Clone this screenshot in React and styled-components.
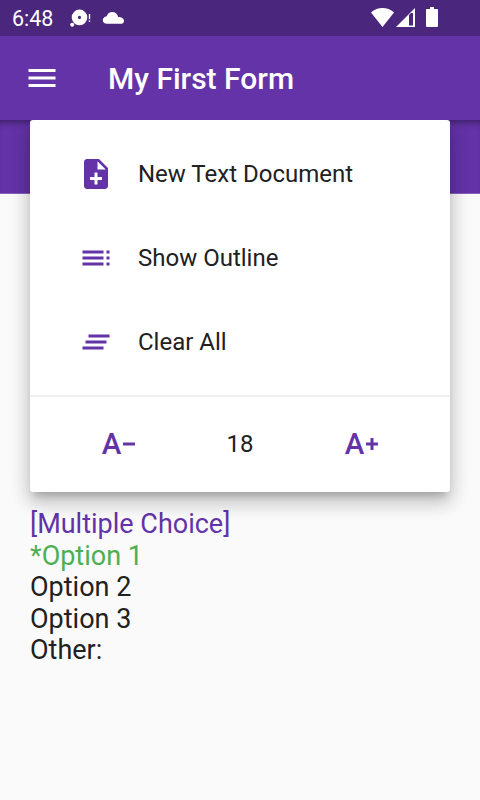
import React from "react";
import styled, { createGlobalStyle } from "styled-components";
import { MdMenu, MdNoteAdd, MdToc, MdClearAll } from "react-icons/md";

const GlobalStyle = createGlobalStyle`
  body {
    margin: 0;
    font-family: Roboto, "Liberation Sans", sans-serif;
  }
`;

const Screen = styled.div`
  position: relative;
  display: flex;
  flex-direction: column;
  height: 800px;
  width: 480px;
  overflow: hidden;
  background: #fafafa;
`;

const StatusBar = styled.div`
  display: flex;
  align-items: center;
  justify-content: space-between;
  height: 36px;
  flex: none;
  padding: 0 42px 0 12px;
  box-sizing: border-box;
  background: #4a277c;
  color: white;
`;

const StatusGroup = styled.div`
  display: flex;
  align-items: center;
`;

const Clock = styled.div`
  width: 58px;
  font-size: 21.5px;
  line-height: 36px;
  padding-top: 2px;
`;

const AppBar = styled.header`
  display: flex;
  align-items: center;
  gap: 48px;
  height: 84px;
  flex: none;
  padding: 0 24px;
  box-sizing: border-box;
  background: #6333a7;
  color: white;
  z-index: 3;
`;

const Title = styled.h1`
  font-size: 30px;
  font-weight: 500;
  line-height: 36px;
  margin: 2px 0 0;
  white-space: nowrap;
`;

const Band = styled.div`
  height: 74px;
  flex: none;
  box-sizing: border-box;
  background: #6333a7;
  border-bottom: 1px solid #8660bc;
  box-shadow: inset 0 7px 6px -4px rgba(0, 0, 0, 0.35);
`;

const FormText = styled.div`
  padding: 315px 30px 0;
`;

const Line = styled.div`
  font-size: 27px;
  line-height: 31.5px;
  color: ${(props) => props.$color || "#212121"};
`;

const Menu = styled.div`
  position: absolute;
  top: 120px;
  left: 30px;
  z-index: 2;
  width: 420px;
  height: 372px;
  box-sizing: border-box;
  padding-top: 12px;
  background: white;
  border-radius: 3px;
  box-shadow: 0 7px 8px -4px rgba(0, 0, 0, 0.2),
    0 12px 18px 1px rgba(0, 0, 0, 0.14), 0 3px 22px 2px rgba(0, 0, 0, 0.12);
`;

const MenuItem = styled.div`
  display: flex;
  align-items: center;
  gap: 24px;
  height: 84px;
  padding-left: 48px;
  font-size: 24px;
  color: #212121;

  svg {
    color: #6333a7;
  }
`;

const Divider = styled.div`
  height: 2px;
  margin-top: 11px;
  background: #efefef;
`;

const SizeRow = styled.div`
  display: grid;
  grid-template-columns: 1fr 66px 1fr;
  align-items: center;
  height: 94px;
`;

const SizeValue = styled.div`
  font-size: 24px;
  line-height: 28px;
  text-align: center;
  color: #212121;
`;

const SizeButton = styled.button`
  display: flex;
  align-items: center;
  justify-content: center;
  gap: 2px;
  border: none;
  padding: 0;
  background: none;
  color: #6333a7;
  font-family: inherit;
  font-size: 29.5px;
  font-weight: 500;
  line-height: 36px;
`;

function NotificationIcons() {
  return (
    <svg width="56" height="36" viewBox="70 0 56 36" fill="currentColor">
      <path
        fillRule="evenodd"
        d="M79.5 9.6a7.8 7.8 0 1 1 0 15.6 7.8 7.8 0 0 1 0-15.6zm0 6.2a1.6 1.6 0 1 0 0 3.2 1.6 1.6 0 0 0 0-3.2z"
      />
      <circle cx="72.2" cy="24.8" r="2" />
      <path d="M88.8 14h1.4v5.2h-1.4zM88.8 20.4h1.4v1.6h-1.4z" />
      <path d="M106.800 23.800c-2.300 0-4-1.500-4-3.600 0-2 1.600-3.600 3.600-3.700.9-2.600 3-4.500 5.800-4.500 3 0 5.300 2 6 4.900 3.100 0 5.800 1.400 5.800 4 0 1.700-1.400 2.900-3.200 2.900z" />
    </svg>
  );
}

function SystemIcons() {
  return (
    <svg width="68" height="36" viewBox="370 0 68 36" fill="currentColor">
      <path d="M371 12.400c6.500-5.800 16.500-5.800 23 0L382.500 27z" />
      <path fillRule="evenodd" d="M396 27L415 8v19zM409 15v10.500h4V13h-2z" />
      <path d="M430 7h4v2h3q1 0 1 1v16q0 1-1 1h-10q-1 0-1-1V10q0-1 1-1h3z" />
    </svg>
  );
}

function SizeSign({ plus }) {
  return (
    <svg width="12" height="12" viewBox="0 0 12 12" fill="currentColor">
      <path d="M0 4.500h12v3H0z" />
      {plus && <path d="M4.500 0h3v12h-3z" />}
    </svg>
  );
}

const menuItems = [
  { icon: MdNoteAdd, label: "New Text Document" },
  { icon: MdToc, label: "Show Outline" },
  { icon: MdClearAll, label: "Clear All" },
];

function App() {
  return (
    <Screen>
      <GlobalStyle />
      <StatusBar>
        <StatusGroup>
          <Clock>6:48</Clock>
          <NotificationIcons />
        </StatusGroup>
        <SystemIcons />
      </StatusBar>
      <AppBar>
        <MdMenu size={36} />
        <Title>My First Form</Title>
      </AppBar>
      <Band />
      <FormText>
        <Line $color="#6333a7">[Multiple Choice]</Line>
        <Line $color="#4caf50">*Option 1</Line>
        <Line>Option 2</Line>
        <Line>Option 3</Line>
        <Line>Other:</Line>
      </FormText>
      <Menu>
        {menuItems.map(({ icon: Icon, label }) => (
          <MenuItem key={label}>
            <Icon size={36} />
            {label}
          </MenuItem>
        ))}
        <Divider />
        <SizeRow>
          <SizeButton>
            A<SizeSign />
          </SizeButton>
          <SizeValue>18</SizeValue>
          <SizeButton>
            A<SizeSign plus />
          </SizeButton>
        </SizeRow>
      </Menu>
    </Screen>
  );
}

export default App;
